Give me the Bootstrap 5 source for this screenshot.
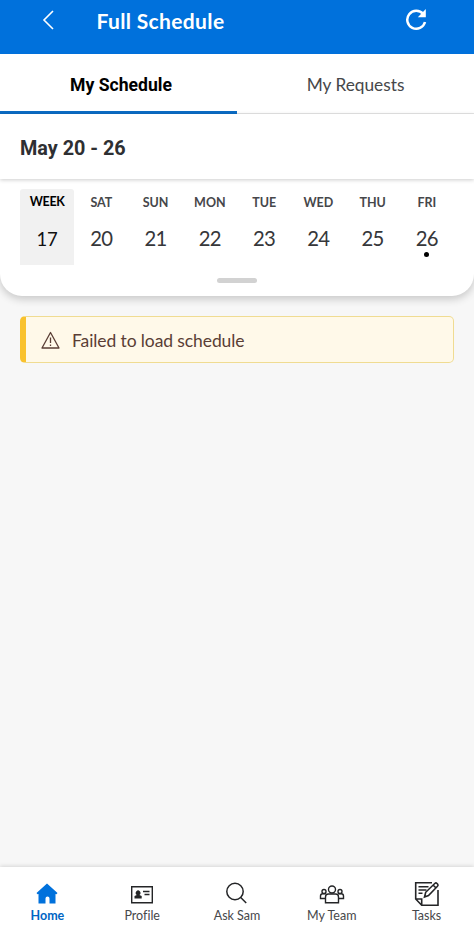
<!DOCTYPE html>
<html lang="en">
<head>
<meta charset="utf-8">
<meta name="viewport" content="width=device-width, initial-scale=1">
<title>Full Schedule</title>
<link href="https://cdn.jsdelivr.net/npm/bootstrap@5.3.0/dist/css/bootstrap.min.css" rel="stylesheet">
<style>
body{font-family:Lato,"Open Sans",sans-serif;background:#f7f7f7;color:#2e2f32;line-height:1;font-variant-ligatures:none}
svg{display:block;flex:none}
.app-bar{height:54px;background:#0071dc;padding:0 47px 14px 42px}
.app-title{font-size:21px;font-weight:700;margin-left:40.5px;padding-top:1px;letter-spacing:.35px}
.tabs{height:60px;background:#fff;border-bottom:1px solid #e6e6e6;box-shadow:0 1px 2px #0001}
.tab-item{font-size:17.3px;padding-top:5px;margin-bottom:-1px;border-bottom:3px solid transparent;color:#46474a}
.tab-item.current{font-family:Roboto,sans-serif;font-weight:700;font-size:17.6px;color:#000;border-color:#0b6cc4;padding-top:7px;padding-left:5px}
.range{height:65px;font-family:Roboto,sans-serif;font-weight:700;font-size:19.8px;padding:4px 20px 0;background:#fff;box-shadow:0 1px 4px #0003}
.week-panel{height:117px;background:#fff;border-radius:0 0 22px 22px;box-shadow:0 3px 9px #0003;padding:10px 20px 0}
.day{height:76px;padding-top:8px;font-size:12.5px;line-height:12px;font-weight:700;letter-spacing:0;color:#46474a}
.num{font-size:20.3px;line-height:20px;font-weight:400;letter-spacing:-.7px;margin-top:19px;color:#36373a}
.week-cell{background:#f1f1f1;border-radius:3px 3px 0 0;color:#000;padding-top:7px;letter-spacing:-.3px}
.week-cell .num{font-size:18.5px;color:#111;margin-top:21px;letter-spacing:0}
.dot{width:5px;height:5px;background:#000;margin-top:4px}
.handle{width:40px;height:5px;background:#d2d2d2;margin-top:13px}
.notice{height:47px;margin:20px 20px 0;background:#fff9e9;border:1px solid #f0dc92;border-left:6px solid #f9c22e;border-radius:5px;color:#5a3e35;font-size:17.5px;padding-left:15px}
.notice span{margin-left:12px;padding-top:3px;letter-spacing:-.1px}
.bottom-bar{height:58px;background:#fff;box-shadow:0 -1px 4px #0002;font-size:12.5px;color:#46474a}
.bottom-bar a{color:inherit;padding-top:13px}
.bottom-bar svg{margin-bottom:2px;color:#242527}
.bottom-bar a.current{color:#0065c4;font-weight:700}
.bottom-bar a.current svg{color:#0071dc}
</style>
<script src="https://cdn.jsdelivr.net/npm/bootstrap@5.3.0/dist/js/bootstrap.bundle.min.js"></script>
</head>
<body class="vh-100 d-flex flex-column overflow-hidden">
<header class="app-bar d-flex align-items-center text-white flex-shrink-0">
  <svg width="14" height="20" fill="none" stroke="currentColor" stroke-width="1.6"><path d="M11 1 2 10l9 9"/></svg>
  <h1 class="app-title mb-0">Full Schedule</h1>
  <svg class="ms-auto" width="22" height="22" fill="none" stroke="currentColor" stroke-width="2.5"><path d="M18.2 5A9 9 0 1 0 20 13"/><path d="M20.800 0v8.200h-8z" fill="currentColor" stroke="none"/></svg>
</header>
<nav class="tabs d-flex flex-shrink-0">
  <div class="tab-item current w-50 d-flex align-items-center justify-content-center">My Schedule</div>
  <div class="tab-item w-50 d-flex align-items-center justify-content-center">My Requests</div>
</nav>
<div class="range d-flex align-items-center flex-shrink-0 position-relative">May 20 - 26</div>
<section class="week-panel flex-shrink-0">
  <div class="row row-cols-auto g-0 flex-nowrap text-center">
    <div class="col flex-fill w-100 day week-cell">WEEK<div class="num">17</div></div>
    <div class="col flex-fill w-100 day">SAT<div class="num">20</div></div>
    <div class="col flex-fill w-100 day">SUN<div class="num">21</div></div>
    <div class="col flex-fill w-100 day">MON<div class="num">22</div></div>
    <div class="col flex-fill w-100 day">TUE<div class="num">23</div></div>
    <div class="col flex-fill w-100 day">WED<div class="num">24</div></div>
    <div class="col flex-fill w-100 day">THU<div class="num">25</div></div>
    <div class="col flex-fill w-100 day">FRI<div class="num">26</div><div class="dot rounded-circle mx-auto"></div></div>
  </div>
  <div class="handle rounded-pill mx-auto"></div>
</section>
<main class="flex-grow-1">
  <div class="notice d-flex align-items-center" role="alert">
    <svg width="19" height="19" fill="none" stroke="currentColor" stroke-width="1.3" stroke-linejoin="round"><path d="M9.5 2.5 18 18H1zM9.5 7.500v5.500M9.5 14.500v1.500"/></svg>
    <span>Failed to load schedule</span>
  </div>
</main>
<nav class="bottom-bar row g-0 flex-shrink-0 text-center">
  <a class="col current d-flex flex-column align-items-center text-decoration-none" href="#">
    <svg width="24" height="28" fill="currentColor"><path d="m12 3.500 10.500 9.500-1 1.300-1-.3v9.500h-6V18.500a2 2 0 0 0-4 0v5h-7V14l-1 .3-1-1.300z"/></svg>Home</a>
  <a class="col d-flex flex-column align-items-center text-decoration-none" href="#">
    <svg width="24" height="28" fill="none" stroke="currentColor" stroke-width="1.4"><path d="M1.700 6.700h20.600v16H1.700zM13 11.500h6.500M14.500 14.500h5"/><path d="M4.500 18.500v-2.500l2.300-1a2.300 2.500 0 1 1 2.600 0l2.300 1v2.500z" fill="currentColor" stroke="none"/></svg>Profile</a>
  <a class="col d-flex flex-column align-items-center text-decoration-none" href="#">
    <svg width="24" height="28" fill="none" stroke="currentColor" stroke-width="1.5"><circle cx="10" cy="11.500" r="8.200"/><path d="m15.700 17.500 5.500 5.500"/></svg>Ask Sam</a>
  <a class="col d-flex flex-column align-items-center text-decoration-none" href="#">
    <svg width="26" height="28" fill="none" stroke="currentColor" stroke-width="1.400"><circle cx="13" cy="9.500" r="3.500"/><path d="M6.500 22.700V17q0-3 3-3h7q3 0 3 3v5.700z"/><circle cx="5" cy="11.500" r="2"/><circle cx="21" cy="11.500" r="2"/><path d="M6.500 18.500h-5V16q0-2.200 2.200-2.200h3.500M19.500 18.500h5V16q0-2.200-2.200-2.200h-3.500"/></svg>My Team</a>
  <a class="col d-flex flex-column align-items-center text-decoration-none" href="#">
    <svg width="26" height="28" fill="none" stroke="currentColor" stroke-width="1.600"><path d="M18 2.700H1.700V19l6 6.300H24V10M1.700 19h6v6.300M4.500 6.700h10M4.500 10h8M4.500 13.300h4"/><path d="m10.500 17 1.200-4.700 9.300-9q1-.8 2 .2l.7.700q.8 1-.2 2L14.500 15.500zM19 5l2.800 2.800"/></svg>Tasks</a>
</nav>
</body>
</html>
